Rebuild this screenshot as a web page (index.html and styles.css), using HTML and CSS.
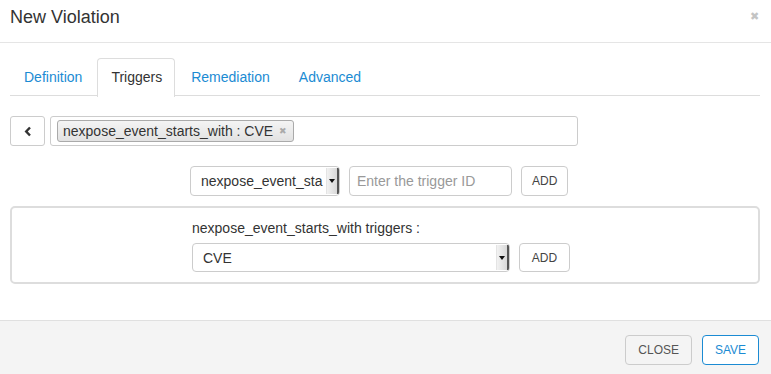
FILE: index.html
```html
<!DOCTYPE html>
<html>
<head>
<meta charset="utf-8">
<link rel="stylesheet" href="styles.css">
</head>
<body>
<div class="modal">
  <div class="modal-header">
    <h4 class="title">New Violation</h4>
    <span class="close-x">&#x2716;</span>
  </div>
  <div class="modal-body">
    <ul class="tabs">
      <li class="tab">Definition</li>
      <li class="tab active">Triggers</li>
      <li class="tab">Remediation</li>
      <li class="tab">Advanced</li>
    </ul>
    <div class="row-tags">
      <button class="back-btn"><svg width="8" height="11" viewBox="0 0 8 11"><path d="M6 1.5 L2.2 5.5 L6 9.5" fill="none" stroke="#333" stroke-width="2.4"/></svg></button>
      <div class="tag-input">
        <span class="chip">nexpose_event_starts_with : CVE <span class="chip-x">&#x2716;</span></span>
      </div>
    </div>
    <div class="row-add">
      <div class="sel sel-small"><span class="sel-text">nexpose_event_sta</span><span class="sel-arrow"><i></i></span></div>
      <div class="text-input">Enter the trigger ID</div>
      <button class="btn">ADD</button>
    </div>
    <div class="panel">
      <div class="panel-inner">
        <div class="panel-label">nexpose_event_starts_with triggers :</div>
        <div class="panel-row">
          <div class="sel sel-wide"><span class="sel-text">CVE</span><span class="sel-arrow"><i></i></span></div>
          <button class="btn btn-add2">ADD</button>
        </div>
      </div>
    </div>
  </div>
  <div class="modal-footer">
    <button class="btn btn-foot">CLOSE</button>
    <button class="btn btn-foot btn-save">SAVE</button>
  </div>
</div>
</body>
</html>
```

FILE: styles.css
```css
* { box-sizing: border-box; }
html, body { margin: 0; padding: 0; background: #fff; }
body { font-family: "Liberation Sans", Arial, sans-serif; color: #333; font-size: 14px; }
.modal { width: 771px; height: 374px; display: flex; flex-direction: column; }
.modal-header { height: 43px; border-bottom: 1px solid #e5e5e5; display: flex; align-items: center; justify-content: space-between; padding: 0 12px 0 10px; }
.title { margin: 0; font-size: 18px; font-weight: normal; color: #333; line-height: 20px; padding-bottom: 8px; }
.close-x { color: #c4c4c4; font-size: 11px; padding-bottom: 9px; }
.modal-body { padding: 15px 11px 0 10px; flex: 1; }
.tabs { list-style: none; margin: 0; padding: 0; display: flex; border-bottom: 1px solid #ddd; height: 38px; }
.tab { padding: 9px 12px 10px 13px; margin-right: 2px; color: #1b8bd3; font-size: 14px; line-height: 18px; border: 1px solid transparent; border-bottom: none; border-radius: 4px 4px 0 0; height: 38px; }
.tab.active { color: #333; border-color: #ddd; background: #fff; height: 39px; }
.row-tags { display: flex; gap: 5px; margin-top: 20px; height: 30px; }
.back-btn { width: 35px; height: 30px; border: 1px solid #ccc; border-radius: 3px; background: #fff; display: flex; align-items: center; justify-content: center; padding: 0; }
.tag-input { width: 528px; height: 30px; border: 1px solid #ccc; border-radius: 3px; padding: 3px 6px; display: flex; align-items: center; }
.chip { display: inline-flex; align-items: center; height: 22px; border: 1px solid #aaa; border-radius: 3px; background: linear-gradient(#f4f4f4, #e2e2e2); padding: 0 6px 0 5px; font-size: 14px; color: #333; gap: 4px; }
.chip-x { color: #aaa; font-size: 9px; margin-left: 2px; }
.row-add { display: flex; gap: 9px; margin-top: 20px; margin-left: 180px; height: 30px; }
.sel { height: 30px; border: 1px solid #ccc; border-radius: 4px; display: flex; align-items: stretch; overflow: hidden; background: #fff; }
.sel-text { flex: 1; padding: 0 10px; display: flex; align-items: center; white-space: nowrap; overflow: hidden; font-size: 14px; color: #333; }
.sel-small { width: 150px; }
.sel-arrow { width: 13px; background: linear-gradient(to right, #f2f2f2, #d8d8d8); border-left: 1px solid #e4e4e4; border-right: 2px solid #555; display: flex; align-items: center; justify-content: center; margin: 1px 0; }
.sel-arrow i { width: 0; height: 0; border-left: 3px solid transparent; border-right: 3px solid transparent; border-top: 4px solid #111; }
.text-input { width: 163px; height: 30px; border: 1px solid #ccc; border-radius: 4px; padding: 0 7px; color: #999; display: flex; align-items: center; font-size: 14px; }
.btn { height: 30px; border: 1px solid #ccc; border-radius: 4px; background: #fff; color: #444; font-family: "Liberation Sans", Arial, sans-serif; font-size: 12px; padding: 0 10px; }
.panel { margin-top: 10px; border: 2px solid #ddd; border-radius: 5px; height: 78px; padding: 11px 0 0 180px; }
.panel-label { font-size: 14px; line-height: 18px; padding-left: 0; }
.panel-row { display: flex; gap: 9px; margin-top: 6px; }
.sel-wide { width: 318px; height: 29px; }
.btn-add2 { width: 51px; height: 29px; }
.modal-footer { height: 54px; border-top: 1px solid #e0e0e0; background: #f4f4f4; display: flex; justify-content: flex-end; align-items: flex-start; gap: 10px; padding: 14px 12px 0 0; }
.btn-foot { height: 30px; font-size: 12px; padding: 0 12px; background: #f4f4f4; color: #555; }
.btn-save { border-color: #1b8bd3; color: #1b8bd3; background: #fff; width: 57px; padding: 0; }
```
